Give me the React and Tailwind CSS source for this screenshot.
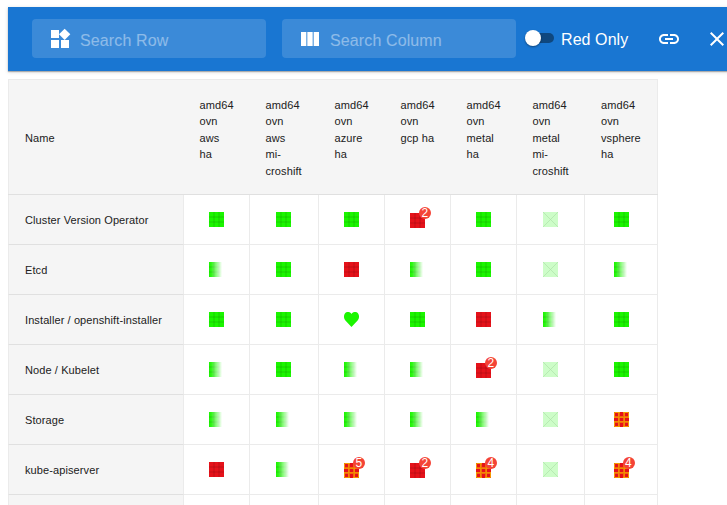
import React from "react";
import { MdWidgets, MdLink, MdClose } from "react-icons/md";

const HEADERS = [
  ["amd64", "ovn", "aws", "ha"],
  ["amd64", "ovn", "aws", "mi-", "croshift"],
  ["amd64", "ovn", "azure", "ha"],
  ["amd64", "ovn", "gcp ha"],
  ["amd64", "ovn", "metal", "ha"],
  ["amd64", "ovn", "metal", "mi-", "croshift"],
  ["amd64", "ovn", "vsphere", "ha"],
];

// g: passing, f: fading, r: red, x: no data, h: heart, w: woven; a digit adds a badge
const ROWS = [
  ["Cluster Version Operator", ["g", "g", "g", "r2", "g", "x", "g"]],
  ["Etcd", ["f", "g", "r", "f", "g", "x", "f"]],
  ["Installer / openshift-installer", ["g", "g", "h", "g", "r", "f", "g"]],
  ["Node / Kubelet", ["f", "g", "f", "f", "r2", "x", "g"]],
  ["Storage", ["f", "f", "f", "f", "f", "x", "w"]],
  ["kube-apiserver", ["r", "f", "w5", "r2", "w4", "x", "w4"]],
  ["", ["", "", "", "", "", "", ""]],
];

const COLS = "grid grid-cols-[176px_66px_69px_66px_66px_66px_68px_73px]";

function Weave({ base }) {
  return (
    <>
      <rect width="15" height="15" fill={base} />
      <g fill="#000" fillOpacity="0.07">
        <rect x="4" width="2" height="15" />
        <rect x="9" width="2" height="15" />
        <rect y="4" width="15" height="2" />
        <rect y="9" width="15" height="2" />
      </g>
    </>
  );
}

function Glyph({ kind }) {
  return (
    <svg width="15" height="15" viewBox="0 0 15 15" className="block">
      {kind === "g" && <Weave base="#1bf500" />}
      {kind === "r" && <Weave base="#e5121a" />}
      {kind === "f" && (
        <>
          <defs>
            <linearGradient id="fade" x1="0" x2="1" y1="0" y2="0">
              <stop offset="0" stopColor="#fff" stopOpacity="0" />
              <stop offset="0.15" stopColor="#fff" stopOpacity="0.08" />
              <stop offset="0.87" stopColor="#fff" stopOpacity="1" />
            </linearGradient>
          </defs>
          <Weave base="#1bf500" />
          <rect width="15" height="15" fill="url(#fade)" />
        </>
      )}
      {kind === "x" && (
        <>
          <rect width="15" height="15" fill="#cdfdc8" />
          <path d="M0 0l15 15M15 0L0 15" stroke="#a9dda4" strokeWidth="0.6" />
        </>
      )}
      {kind === "h" && (
        <path
          fill="#1bf500"
          d="M7.5 15L1.4 8.6C-.4 6.6-.4 3.2.9 1.5 2.5-.5 6-.5 7.5 1.9 9-.5 12.5-.5 14.1 1.5c1.3 1.7 1.3 5.1-.5 7.1z"
        />
      )}
      {kind === "w" && (
        <>
          <rect width="15" height="15" fill="#e5121a" />
          <path d="M4 0h2v15H4zM9 0h2v15H9zM0 4h15v2H0zM0 9h15v2H0z" fill="#f06a0a" />
          <path d="M4.5 0v15M10.5 0v15M0 5.5h15M0 9.5h15" stroke="#f59a00" strokeWidth="0.6" fill="none" />
          <path d="M.5 .5h14v14H.5z" stroke="#f59a00" fill="none" />
          <path d="M6 0h3v1H6zM6 14h3v1H6zM0 6h1v3H0zM14 6h1v3h-1z" fill="#e5121a" />
        </>
      )}
    </svg>
  );
}

function Cell({ value, nudge }) {
  const badge = value[1];
  return (
    <div
      className={`flex items-center justify-center border-r border-b border-[#ebebeb] ${nudge ? "pr-[2px]" : ""}`}
    >
      {value && (
        <div className={badge ? "relative mt-[2px]" : "relative"}>
          <Glyph kind={value[0]} />
          {badge && (
            <span className="absolute -top-[6px] left-[9px] flex size-3 items-center justify-center rounded-full bg-[#f44336] text-[12px] leading-none text-white">
              {badge}
            </span>
          )}
        </div>
      )}
    </div>
  );
}

function Search({ icon, placeholder }) {
  return (
    <label className="mb-[1px] flex h-[39px] w-[234px] shrink-0 items-center rounded bg-white/15 pl-4 text-white">
      {icon}
      <input
        placeholder={placeholder}
        className="mt-[4px] ml-2 w-[170px] bg-transparent text-[16px] leading-[23px] tracking-[0.12px] text-white outline-none placeholder:text-white/42"
      />
    </label>
  );
}

export default function App() {
  return (
    <div className="h-[505px] w-[727px] overflow-hidden bg-white pt-[7px] pl-2 font-['Liberation_Sans',Arial,sans-serif]">
      <header className="flex h-16 w-[760px] items-center bg-[#1976d2] pl-6 text-white shadow-[0_1px_1px_rgba(0,0,0,0.25),0_1px_4px_rgba(0,0,0,0.16)]">
        <Search icon={<MdWidgets size={24} />} placeholder="Search Row" />
        <div className="w-4 shrink-0" />
        <Search
          icon={
            <svg width="24" height="24" viewBox="0 0 24 24" fill="currentColor">
              <path d="M14.67 5v14H9.33V5h5.34zm1 14H21V5h-5.33v14zm-7.34 0V5H3v14h5.33z" />
            </svg>
          }
          placeholder="Search Column"
        />
        <div className="relative mb-[2px] ml-[9px] flex h-4 w-[29px] shrink-0 items-center">
          <span className="ml-[3px] h-[10px] w-[26px] rounded-full bg-[#0f477e]" />
          <span className="absolute left-0 size-4 rounded-full bg-white shadow-[0_1px_2px_rgba(0,0,0,0.4)]" />
        </div>
        <span className="mt-[2px] ml-[7px] w-[96px] shrink-0 text-[16px] leading-6 tracking-[0.08px]">Red Only</span>
        <MdLink size={24} className="shrink-0" />
        <MdClose size={24} className="ml-6 shrink-0" />
      </header>

      <div className="mt-2 w-[650px] text-[11px] leading-[16.5px] tracking-[0.1px] text-[#212121]">
        <div className={`${COLS} h-[116px] border-t border-b border-t-[#ebebeb] border-b-[#e0e0e0] bg-[#f5f5f5]`}>
          <div className="flex items-center border-l border-[#ebebeb] pt-[2px] pl-4">Name</div>
          {HEADERS.map((lines, i) => (
            <div
              key={i}
              className={`pt-[16.5px] ${i === 6 ? "border-r border-[#ebebeb] pl-4" : "pl-[15.5px]"}`}
            >
              {lines.map((line, j) => (
                <div key={j} className="whitespace-nowrap">{line}</div>
              ))}
            </div>
          ))}
        </div>
        {ROWS.map(([name, cells], r) => (
          <div key={r} className={`${COLS} h-[50px]`}>
            <div className="flex items-center border-x border-b border-x-[#ebebeb] border-b-[#e0e0e0] bg-[#f5f5f5] pt-[2px] pl-4 whitespace-nowrap">
              {name}
            </div>
            {cells.map((value, i) => (
              <Cell key={i} value={value} nudge={i === 1} />
            ))}
          </div>
        ))}
      </div>
    </div>
  );
}
